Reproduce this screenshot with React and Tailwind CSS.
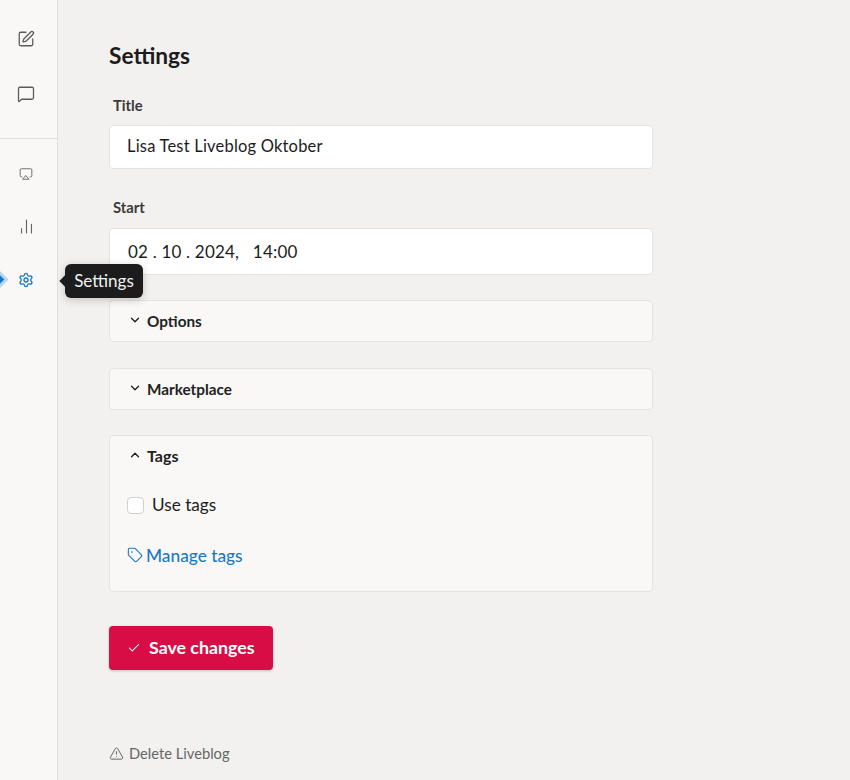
import { SquarePen, MessageSquare, Airplay, ChartNoAxesColumn, Settings, ChevronDown, ChevronUp, Tag, Check, TriangleAlert } from 'lucide-react';

function SideIcon({ children, className }) {
  return <div className={`flex justify-center w-[52px] ${className}`}>{children}</div>;
}

function Collapsed({ title, className }) {
  return (
    <div className={`h-[42px] bg-[#f9f8f6] border border-[#e4e3e1] rounded-[4px] flex items-center pl-[18px] ${className}`}>
      <ChevronDown size={14} strokeWidth={2.2} className="text-[#1c1c1c] mr-[5px] -mt-[2px]" />
      <span className="text-[15.3px] font-bold text-[#222]">{title}</span>
    </div>
  );
}

export default function App() {
  return (
    <div className="flex w-[850px] h-[780px] overflow-hidden bg-[#f2f1ef] font-['Lato',sans-serif] text-[#1c1c1c]">
      <aside className="relative w-[58px] shrink-0 bg-[#f9f8f6] border-r border-[#dfdedc] flex flex-col">
        <SideIcon className="mt-[30px]"><SquarePen size={18} strokeWidth={1.7} className="text-[#5a5a5a]" /></SideIcon>
        <SideIcon className="mt-[37px]"><MessageSquare size={18} strokeWidth={1.7} className="text-[#5a5a5a]" /></SideIcon>
        <div className="mt-[35px] border-t border-[#dfdedc]" />
        <SideIcon className="mt-[28px]"><Airplay size={14} strokeWidth={1.6} className="text-[#666]" /></SideIcon>
        <SideIcon className="mt-[37px]"><ChartNoAxesColumn size={17} strokeWidth={1.6} className="text-[#666]" /></SideIcon>
        <SideIcon className="mt-[37px]"><Settings size={16} strokeWidth={2} className="text-[#1878c8]" /></SideIcon>
        {/* active marker */}
        <div className="absolute left-[-9px] top-[274px] w-[11px] h-[11px] rotate-45 bg-[#1878c8] shadow-[0_0_0_3px_#b5d6f0]" />
        {/* tooltip */}
        <div className="absolute left-[65px] top-[264px] h-[34px] w-[78px] rounded-[6px] bg-[#1c1c1c] text-[#f2f2f2] text-[17px] flex items-center justify-center shadow-[0_2px_8px_rgba(0,0,0,0.2)] z-10">
          <span className="absolute left-[-4px] top-[13px] w-[8px] h-[8px] rotate-45 bg-[#1c1c1c]" />
          Settings
        </div>
      </aside>

      <main className="w-[544px] ml-[51px] pt-[43px]">
        <h1 className="text-[22.7px] leading-[26px] font-bold text-[#1c1c1c]">Settings</h1>
        <div className="mt-[27px] ml-[4px] text-[14.8px] leading-[18px] font-bold text-[#3a3a3a]">Title</div>
        <div className="mt-[11px] h-[44px] pb-[1px] bg-white border border-[#e4e3e1] rounded-[4px] flex items-center pl-[17px] text-[16.5px] tracking-[0.2px]">Lisa Test Liveblog Oktober</div>
        <div className="mt-[29px] ml-[4px] text-[14.8px] leading-[18px] font-bold text-[#3a3a3a]">Start</div>
        <div className="mt-[12px] h-[47px] bg-white border border-[#e4e3e1] rounded-[4px] flex items-center pl-[18px] text-[17px] tracking-[0.2px] whitespace-pre">02 . 10 . 2024,   14:00</div>

        <Collapsed title="Options" className="mt-[25px]" />
        <Collapsed title="Marketplace" className="mt-[26px]" />

        <div className="mt-[25px] h-[157px] bg-[#f9f8f6] border border-[#e4e3e1] rounded-[4px] pl-[17px]">
          <div className="flex items-center h-[40px] pl-[1px]">
            <ChevronUp size={14} strokeWidth={2.2} className="text-[#1c1c1c] mr-[5px] -mt-[2px]" />
            <span className="text-[16px] font-bold text-[#222]">Tags</span>
          </div>
          <div className="mt-[19px] flex items-center">
            <span className="w-[17px] h-[17px] bg-white border border-[#d2d1cf] rounded-[4px]" />
            <span className="ml-[8px] text-[17.2px] leading-[20px]">Use tags</span>
          </div>
          <div className="mt-[31px] flex items-center text-[#1878c8]">
            <Tag size={16} strokeWidth={1.6} className="-mt-[3px]" />
            <span className="ml-[3px] text-[17.3px] leading-[20px] font-medium">Manage tags</span>
          </div>
        </div>

        <button className="mt-[34px] h-[44px] w-[164px] pb-[1px] bg-[#d80d45] rounded-[4px] text-white flex items-center pl-[18px] shadow-[0_1px_3px_rgba(0,0,0,0.2)]">
          <Check size={14} strokeWidth={1.8} className="mr-[8px]" />
          <span className="text-[17.8px] font-bold">Save changes</span>
        </button>

        <div className="mt-[73px] flex items-center text-[#666]">
          <TriangleAlert size={15} strokeWidth={1.6} />
          <span className="ml-[5px] text-[14.7px] leading-[20px]">Delete Liveblog</span>
        </div>
      </main>
    </div>
  );
}
